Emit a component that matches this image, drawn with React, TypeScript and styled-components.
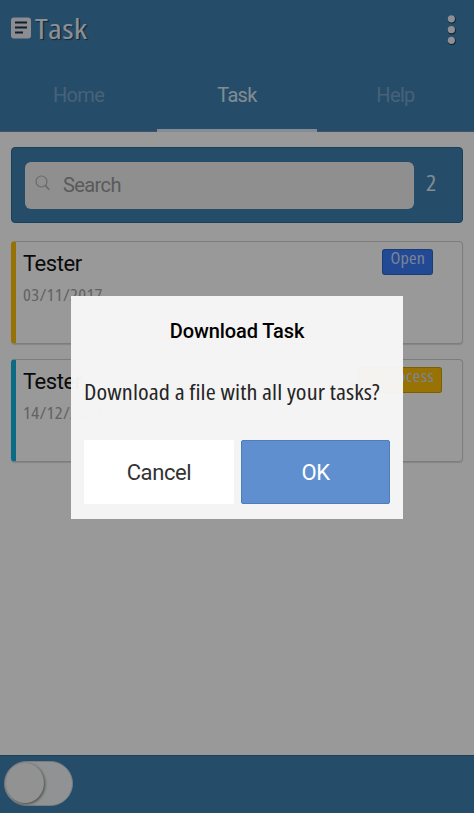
import React from 'react';
import styled, { createGlobalStyle } from 'styled-components';

const Global = createGlobalStyle`
  * { box-sizing: border-box; }
  body { margin: 0; font-family: Roboto, "Liberation Sans", sans-serif; }
`;

const Screen = styled.div`
  position: relative;
  width: 474px;
  height: 813px;
  overflow: hidden;
  display: flex;
  flex-direction: column;
  background: #fff;
`;

const Narrow = styled.span<{
  $size: number;
  $spacing?: number;
  $weight?: number;
  $scale?: number;
  $origin?: string;
}>`
  display: inline-block;
  white-space: nowrap;
  font-family: "Open Sans", "Noto Sans", sans-serif;
  font-weight: ${(p) => p.$weight ?? 400};
  font-stretch: 75%;
  font-size: ${(p) => p.$size}px;
  letter-spacing: ${(p) => p.$spacing ?? 0}px;
  transform: scaleX(${(p) => p.$scale ?? 1.08});
  transform-origin: ${(p) => p.$origin ?? 'left'} center;
`;

const Header = styled.header`
  height: 132px;
  flex: none;
  display: flex;
  flex-direction: column;
  justify-content: space-between;
  background: #3f80b1;
  border-bottom: 1px solid #7486ad;
`;

const TitleBar = styled.div`
  height: 56px;
  padding: 1px 18px 0 11px;
  display: flex;
  align-items: center;
  justify-content: space-between;
  color: #eceff5;
  text-shadow: 1px 1px 1px #193f5e;
`;

const Brand = styled.div`
  display: flex;
  align-items: center;
  gap: 4px;
  line-height: 30px;
  margin-top: -1px;
`;

const Tabs = styled.nav`
  height: 74px;
  display: grid;
  grid-template-columns: 157px 160px 157px;
  margin-bottom: -1px;
`;

const Tab = styled.div<{ $active?: boolean }>`
  display: flex;
  justify-content: center;
  padding-top: 25px;
  font-size: 20px;
  line-height: 25px;
  letter-spacing: -0.65px;
  color: ${(p) => (p.$active ? '#d7e9f4' : '#77a4c9')};
  border-bottom: 3px solid ${(p) => (p.$active ? '#dcecf8' : 'transparent')};
`;

const Content = styled.main`
  flex: 1;
  padding: 15px 11px 0;
`;

const SearchPanel = styled.section`
  height: 76px;
  margin: 0 0 18px;
  padding: 0 0 0 13px;
  display: flex;
  align-items: center;
  border: 1px solid #2c6994;
  border-radius: 4px;
  background: #3f80b1;
`;

const TaskCount = styled.div`
  margin: -6px 0 0 12px;
  color: #d9e9f5;
`;

const SearchField = styled.div`
  width: 389px;
  height: 47px;
  padding-left: 10px;
  display: flex;
  align-items: center;
  gap: 13px;
  border-radius: 6px;
  background: #efefef;
  color: #969696;
  font-size: 20px;
  letter-spacing: -0.6px;
  svg { margin-top: -5px; }
`;

const TaskCard = styled.article<{ $accent: string }>`
  height: 103px;
  margin-bottom: 15px;
  padding: 8px 29px 0 7px;
  display: flex;
  justify-content: space-between;
  border: 1px solid #d0d0d0;
  border-left: 5px solid ${(p) => p.$accent};
  border-radius: 4px;
  box-shadow: 0 1px 1px #ddd;
`;

const TaskText = styled.div`
  display: flex;
  flex-direction: column;
`;

const TaskName = styled.div`
  height: 33px;
  font-size: 22px;
  line-height: 27px;
  letter-spacing: -0.45px;
  color: #111;
`;

const TaskDate = styled.div`
  line-height: 24px;
  color: #a4a4a4;
`;

const Status = styled.div<{ $width: number; $color: string; $shift?: number }>`
  width: ${(p) => p.$width}px;
  height: 26px;
  margin: -1px ${(p) => p.$shift ?? 0}px 0 0;
  display: flex;
  justify-content: center;
  line-height: 16px;
  border: 1px solid rgba(0, 0, 0, 0.18);
  border-radius: 3px;
  color: #cbdcff;
  background: ${(p) => p.$color};
`;

const Footer = styled.footer`
  height: 58px;
  flex: none;
  padding: 5px 4px;
  background: #3f80b1;
  border-top: 1px solid #316b91;
`;

const Switch = styled.div`
  width: 69px;
  height: 45px;
  padding: 1px;
  border-radius: 23px;
  background: #f2f4f5;
  border: 1px solid #c5d2da;
`;

const Thumb = styled.div`
  width: 38px;
  height: 40px;
  border-radius: 50%;
  background: #f3f3f3;
  box-shadow: 1px 1px 3px rgba(0, 0, 0, 0.5);
`;

const Backdrop = styled.div`
  position: absolute;
  inset: 0;
  padding-top: 296px;
  display: flex;
  justify-content: center;
  align-items: flex-start;
  background: rgba(0, 0, 0, 0.4);
`;

const Dialog = styled.section`
  width: 332px;
  height: 223px;
  padding: 20px 13px 15px;
  display: flex;
  flex-direction: column;
  background: rgba(248, 248, 248, 0.965);
`;

const DialogTitle = styled.h2`
  height: 30px;
  margin: 0;
  text-align: center;
  font-size: 20px;
  font-weight: 500;
  line-height: 30px;
  letter-spacing: -0.1px;
  color: #000;
`;

const Message = styled.p`
  margin: 29px 0 0;
  height: 34px;
  line-height: 34px;
  color: #252525;
`;

const Actions = styled.div`
  margin-top: auto;
  display: grid;
  grid-template-columns: 150px 149px;
  gap: 7px;
`;

const DialogButton = styled.button<{ $primary?: boolean }>`
  height: 64px;
  padding: 0;
  border: ${(p) => (p.$primary ? '1px solid #4c7dbd' : '0')};
  border-radius: 2px;
  font: 400 22px Roboto, sans-serif;
  letter-spacing: -0.4px;
  color: ${(p) => (p.$primary ? '#fff' : '#333')};
  background: ${(p) => (p.$primary ? '#5f8fcf' : '#fff')};
`;

const NoteIcon = () => (
  <svg width="20" height="22" viewBox="0 0 20 22">
    <rect x="0" y="0.5" width="20" height="21" rx="3" fill="#eceaf0" />
    <path d="M4 5.5h12M4 10.5h12M4 15.5h8" stroke="#17334a" strokeWidth="2" />
  </svg>
);

const MoreIcon = () => (
  <svg width="10" height="32" viewBox="0 0 10 32">
    <g fill="#123a55">
      <circle cx="5.8" cy="6.6" r="4" />
      <circle cx="5.8" cy="17.5" r="4" />
      <circle cx="5.8" cy="28" r="4" />
    </g>
    <g fill="#eef0f8">
      <circle cx="5.4" cy="5.8" r="3.6" />
      <circle cx="5.4" cy="16.7" r="3.6" />
      <circle cx="5.4" cy="27.3" r="3.6" />
    </g>
  </svg>
);

const SearchIcon = () => (
  <svg width="15" height="16" viewBox="0 0 15 16" fill="none" stroke="#b0b0b0" strokeWidth="1.2">
    <circle cx="6.5" cy="6.5" r="5.5" />
    <path d="m10.3 10.3 3.9 4.4" strokeWidth="1.7" />
  </svg>
);

export default function App() {
  return (
    <>
      <Global />
      <Screen>
        <Header>
          <TitleBar>
            <Brand>
              <NoteIcon />
              <Narrow $size={28} $spacing={0.2} $scale={1.21}>Task</Narrow>
            </Brand>
            <MoreIcon />
          </TitleBar>
          <Tabs>
            <Tab>Home</Tab>
            <Tab $active>Task</Tab>
            <Tab>Help</Tab>
          </Tabs>
        </Header>
        <Content>
          <SearchPanel>
            <SearchField><SearchIcon />Search</SearchField>
            <TaskCount><Narrow $size={21.5} $scale={1.12}>2</Narrow></TaskCount>
          </SearchPanel>
          <TaskCard $accent="#fabe08">
            <TaskText>
              <TaskName>Tester</TaskName>
              <TaskDate><Narrow $size={16.5} $spacing={0.3} $scale={1.12}>03/11/2017 -</Narrow></TaskDate>
            </TaskText>
            <Status $width={51} $color="#3a7af5">
              <Narrow $size={16.5} $spacing={0.2} $scale={1.1} $origin="center">Open</Narrow>
            </Status>
          </TaskCard>
          <TaskCard $accent="#14b3dc">
            <TaskText>
              <TaskName>Tester</TaskName>
              <TaskDate><Narrow $size={16.5} $spacing={0.3} $scale={1.12}>14/12/2017 -</Narrow></TaskDate>
            </TaskText>
            <Status $width={84} $color="#ffbf08" $shift={-9}>
              <Narrow $size={16.5} $spacing={0.3} $scale={1.13} $origin="center">In Process</Narrow>
            </Status>
          </TaskCard>
        </Content>
        <Footer><Switch><Thumb /></Switch></Footer>
        <Backdrop>
          <Dialog role="dialog">
            <DialogTitle>Download Task</DialogTitle>
            <Message>
              <Narrow $size={21.5} $spacing={0.1} $scale={1.128}>Download a file with all your tasks?</Narrow>
            </Message>
            <Actions>
              <DialogButton>Cancel</DialogButton>
              <DialogButton $primary>OK</DialogButton>
            </Actions>
          </Dialog>
        </Backdrop>
      </Screen>
    </>
  );
}
